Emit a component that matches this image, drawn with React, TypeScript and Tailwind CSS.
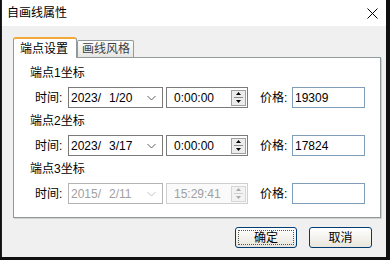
import React from "react";

const FONT = { fontFamily: '"Liberation Sans", "Noto Sans CJK SC", sans-serif' };

function Chevron({ disabled }: { disabled?: boolean }) {
  return (
    <svg width="9" height="6" viewBox="0 0 9 6" className="shrink-0">
      <path d="M0.5 1 L4.5 5 L8.5 1" fill="none" stroke={disabled ? "#c4c4c4" : "#606060"} strokeWidth="1" />
    </svg>
  );
}

function Spin({ disabled }: { disabled?: boolean }) {
  const c = disabled ? "#a8a8a8" : "#000";
  return (
    <div className={`flex flex-col w-[15px] h-[16px] border ${disabled ? "border-[#d6d6d6] bg-[#f2f2f2]" : "border-[#a0a0a0] bg-[#ececec]"}`}>
      <div className="flex-1 flex items-center justify-center">
        <svg width="5" height="3" viewBox="0 0 5 3"><path d="M2.5 0 L5 3 L0 3 Z" fill={c} /></svg>
      </div>
      <div className={`h-px mx-[2px] ${disabled ? "bg-[#d0d0d0]" : "bg-[#8a8a8a]"}`} />
      <div className="flex-1 flex items-center justify-center">
        <svg width="5" height="3" viewBox="0 0 5 3"><path d="M0 0 L5 0 L2.5 3 Z" fill={c} /></svg>
      </div>
    </div>
  );
}

function Row({ date, time, price, disabled }: { date: [string, string]; time: string; price: string; disabled?: boolean }) {
  const txt = disabled ? "text-[#a0a0a0]" : "text-black";
  return (
    <div className="flex items-center h-[21px] pl-[5px] text-[12px]">
      <div className="w-[33px] text-black">时间:</div>
      <div className={`w-[95px] h-[21px] border ${disabled ? "border-[#b4b4b4]" : "border-[#7a7a7a]"} bg-white flex items-center pl-[2px] pr-[6px] ${txt}`}>
        <span>{date[0]}</span>
        <span className="ml-[8px]">{date[1]}</span>
        <div className="flex-1" />
        <Chevron disabled={disabled} />
      </div>
      <div className={`ml-[3px] w-[82px] h-[21px] border ${disabled ? "border-[#cfcfcf] bg-[#fafafa]" : "border-[#7a7a7a] bg-white"} flex items-center pr-[1px] ${txt}`}>
        <span className="flex-1 pl-[7px]">{time}</span>
        <Spin disabled={disabled} />
      </div>
      <div className="ml-[12px] w-[32px] text-black">价格:</div>
      <div className="w-[73px] h-[21px] border border-[#7f9db9] bg-white flex items-center pl-[2px] text-black">{price}</div>
    </div>
  );
}

function Section({ title, children }: { title: string; children: React.ReactNode }) {
  return (
    <div className="flex flex-col">
      <div className="h-[20px] leading-[20px] text-[12px] text-black">{title}</div>
      <div className="mt-[4px]">{children}</div>
    </div>
  );
}

export default function App() {
  return (
    <div className="w-[390px] h-[260px] bg-[#101010] overflow-hidden" style={FONT}>
      <div className="ml-[1px] w-[385px] h-[257px] bg-[#f0f0f0] flex flex-col border-l border-[#202020]">
        <div className="h-[26px] bg-white flex items-center justify-between pl-[5px] pr-[8px] shrink-0">
          <span className="text-[12px] text-black">自画线属性</span>
          <svg width="11" height="11" viewBox="0 0 11 11">
            <path d="M0.5 0.5 L10.5 10.5 M10.5 0.5 L0.5 10.5" stroke="#000" strokeWidth="1" />
          </svg>
        </div>
        <div className="pl-[11px] pt-[11px] flex flex-col">
          <div className="flex items-end h-[20px] relative z-10">
            <div className="w-[64px] h-[21px] mb-[-1px] bg-white border border-[#919b9c] border-b-0 border-t-2 border-t-[#f2a93a] rounded-t-[3px] flex items-center pl-[6px] text-[12px] text-black">
              端点设置
            </div>
            <div className="w-[57px] h-[17px] bg-gradient-to-b from-[#fdfdfd] to-[#e6e6e3] border border-[#919b9c] border-b-0 rounded-t-[2px] flex items-center pl-[4px] text-[12px] text-[#404040]">
              画线风格
            </div>
          </div>
          <div className="w-[368px] h-[161px] bg-white border border-[#919b9c] shadow-[1px_1px_0_#d0d0cc] pl-[16px] pt-[5px] flex flex-col">
            <Section title="端点1坐标">
              <Row date={["2023/", "1/20"]} time="0:00:00" price="19309" />
            </Section>
            <div className="mt-[3px]">
              <Section title="端点2坐标">
                <Row date={["2023/", "3/17"]} time="0:00:00" price="17824" />
              </Section>
            </div>
            <div className="mt-[3px]">
              <Section title="端点3坐标">
                <Row date={["2015/", "2/11"]} time="15:29:41" price="" disabled />
              </Section>
            </div>
          </div>
          <div className="flex justify-end gap-[12px] mt-[9px] pr-[14px]">
            <button className="w-[62px] h-[21px] rounded-[3px] border border-[#003c74] bg-gradient-to-b from-white to-[#e8e6dc] text-[12px] text-black p-[2px]">
              <div className="w-full h-full border border-dotted border-[#555] flex items-center justify-center">确定</div>
            </button>
            <button className="w-[63px] h-[21px] rounded-[3px] border border-[#003c74] bg-gradient-to-b from-white to-[#e8e6dc] text-[12px] text-black flex items-center justify-center">
              取消
            </button>
          </div>
        </div>
      </div>
    </div>
  );
}
